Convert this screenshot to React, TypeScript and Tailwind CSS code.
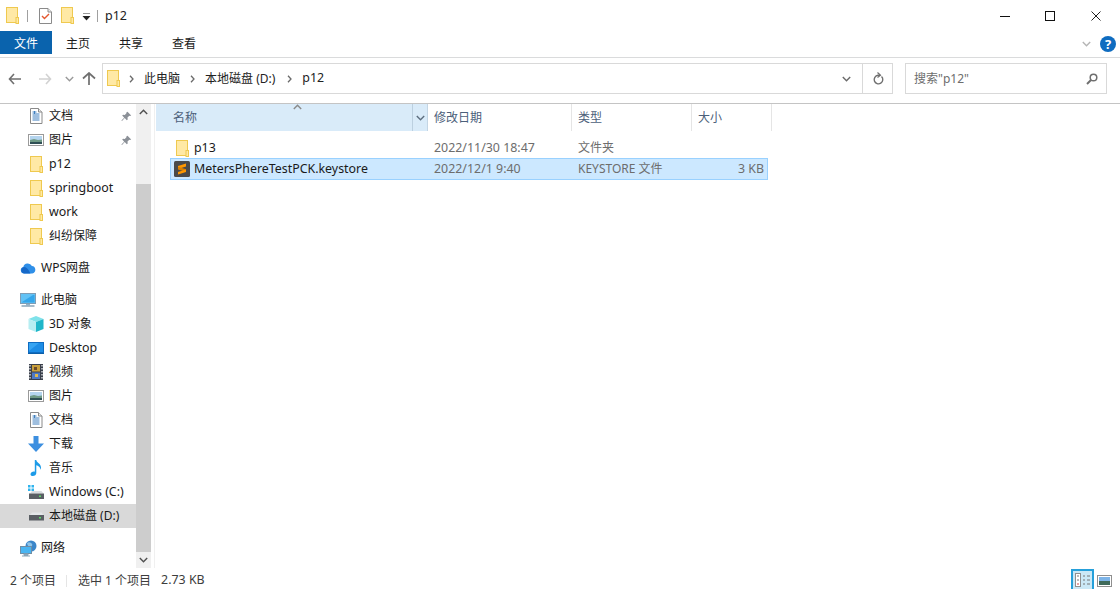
import React from "react";

const Folder = ({ className = "" }: { className?: string }) => (
  <svg width="13" height="17" viewBox="0 0 13 17" className={`shrink-0 ${className}`}>
    <rect x="0.5" y="0.5" width="11" height="15" fill="#ffe9a5" stroke="#efc94f" />
    <rect x="10" y="10.5" width="2.5" height="6" fill="#ffe9a5" stroke="#efc94f" />
  </svg>
);

const DocIcon = () => (
  <svg width="14" height="16" viewBox="0 0 14 16" className="shrink-0">
    <path d="M1.5.5h8l3.5 3.5v11.500h-11.500z" fill="#fff" stroke="#8a8a8a" />
    <path d="M9.500.5v3.500h3.500" fill="#e8e8e8" stroke="#8a8a8a" />
    <path d="M3.500 4h4M3.500 6h7M3.500 8h7M3.500 10h7M3.500 12h7" stroke="#3f7fbf" strokeWidth="1" />
    <path d="M5.500 3v3" stroke="#3f7fbf" />
  </svg>
);

const PicIcon = () => (
  <svg width="16" height="12" viewBox="0 0 16 12" className="shrink-0">
    <rect x="0.500" y="0.500" width="15" height="11" fill="#fff" stroke="#9a9a9a" />
    <rect x="2" y="2" width="12" height="4" fill="#b4d4ee" />
    <path d="M2 6l4-1 4 1 4-.5V10H2z" fill="#6f9a86" />
    <path d="M2 8h12v2H2z" fill="#2f4f55" />
  </svg>
);

const Pin = () => (
  <svg width="11" height="11" viewBox="0 0 11 11">
    <path d="M6.500.8l3.700 3.700-1.200.6-.7-.3-1.800 1.800.2 1.800-.9.800-2.100-2.100-2.700 2.900-.6-.5 2.800-2.800-2-2.100.8-.9 1.800.2 1.800-1.800-.2-.8z" fill="#8b9097" />
  </svg>
);

const Cloud = () => (
  <svg width="16" height="12" viewBox="0 0 16 12" className="shrink-0">
    <path d="M4 11.500a3.300 3.300 0 0 1-.7-6.500 4.600 4.600 0 0 1 8.600-1 3.800 3.800 0 0 1 .4 7.500z" fill="#2f8fe8" />
    <path d="M4 11.500a3.300 3.300 0 0 1 0-6.500c2 0 3.500 1.500 4.500 3l2 3.500z" fill="#1668c8" />
  </svg>
);

const PC = () => (
  <svg width="16" height="14" viewBox="0 0 16 14" className="shrink-0">
    <rect x="0.500" y="0.500" width="15" height="10" fill="#62c2f5" stroke="#7f9db5" />
    <path d="M2 9l11-7h1.500v7.500H2z" fill="#35a6ea" />
    <path d="M6 11h4v1.500H6z" fill="#8fb2c9" />
    <path d="M1.500 13h13" stroke="#8aa5b8" strokeWidth="1.500" />
  </svg>
);

const Cube = () => (
  <svg width="16" height="16" viewBox="0 0 16 16" className="shrink-0">
    <path d="M8 0l7.500 3-7.500 3L.5 3z" fill="#7fe2ea" />
    <path d="M.5 3L8 6v10L.5 13z" fill="#b6eef2" />
    <path d="M15.500 3L8 6v10l7.500-3z" fill="#1fb6c9" />
  </svg>
);

const Desk = () => (
  <svg width="16" height="12" viewBox="0 0 16 12" className="shrink-0">
    <rect x="0.500" y="0.500" width="15" height="10" fill="#36a4f2" stroke="#0f6cc2" />
    <path d="M1 9l10-8h4v9H1z" fill="#1d8de6" />
    <path d="M0 11h16v1H0z" fill="#0c5fa8" />
  </svg>
);

const Film = () => (
  <svg width="14" height="16" viewBox="0 0 14 16" className="shrink-0">
    <rect width="14" height="16" fill="#3a3f4a" />
    <path d="M1 1v14M13 1v14" stroke="#cfd3d8" strokeWidth="1.500" strokeDasharray="1.500 1.500" />
    <rect x="3" y="1" width="8" height="6.500" fill="#c9a03c" />
    <rect x="3" y="8.500" width="8" height="6.500" fill="#4d78c4" />
    <path d="M5 3h3v3H5z" fill="#6c4a2a" />
    <path d="M6 10h3v3H6z" fill="#e0b84a" />
  </svg>
);

const Down = () => (
  <svg width="16" height="16" viewBox="0 0 16 16" className="shrink-0">
    <path d="M5.500 0h5v7.500H16L8 16 0 7.500h5.500z" fill="#3c8fe0" />
  </svg>
);

const Music = () => (
  <svg width="12" height="16" viewBox="0 0 12 16" className="shrink-0">
    <path d="M4.800 0h1.500c.2 2.500 4.700 3.500 4.700 7.500 0 1-.3 1.700-.7 2.200.1-2.800-2-3.800-4-4.400V13c0 1.800-1.700 3-3.500 3C1.300 16 .5 15.200.5 14.200c0-1.500 1.800-2.700 3.300-2.700.4 0 .7 0 1 .2z" fill="#1c9be8" />
  </svg>
);

const WinDrive = () => (
  <svg width="16" height="15" viewBox="0 0 16 15" className="shrink-0">
    <path d="M0 0h2.500v2.500H0zM3.500 0H6v2.500H3.500zM0 3.500h2.500V6H0zM3.500 3.500H6V6H3.500z" fill="#2fb4ee" />
    <path d="M2 8.500 4 6h9.500l2 2.500z" fill="#d9dde0" />
    <rect x="1" y="8.500" width="15" height="5.500" fill="#5a5f64" />
    <rect x="11" y="10.500" width="2" height="1.500" fill="#5fdc6a" />
  </svg>
);

const Drive = () => (
  <svg width="16" height="9" viewBox="0 0 16 9" className="shrink-0">
    <path d="M2 3 4 .5h9.500l2 2.500z" fill="#e4e7e9" />
    <rect x="1" y="3" width="15" height="5.500" fill="#5a5f64" />
    <rect x="11" y="5" width="2" height="1.500" fill="#5fdc6a" />
  </svg>
);

const Net = () => (
  <svg width="17" height="17" viewBox="0 0 17 17" className="shrink-0">
    <circle cx="11" cy="6" r="5.500" fill="#3b86c9" />
    <path d="M7 3c2-1.500 4-.5 5 1s-1 3-2 3-3-2-3-4z" fill="#8fc4e8" />
    <rect x="0.500" y="6.500" width="11" height="7" fill="#49b5f2" stroke="#6f8ea5" />
    <path d="M4 14h4v1.500H4zM2 16h8" stroke="#8aa5b8" fill="#8aa5b8" />
  </svg>
);

const SublimeIcon = () => (
  <svg width="16" height="16" viewBox="0 0 16 16" className="shrink-0">
    <rect width="16" height="16" rx="1.500" fill="#4a4a4a" />
    <path d="M12 2.500 4 5v3l8-2.500z" fill="#ff9800" />
    <path d="M4 5.800 12 8.300V11L4 8.500z" fill="#d97f00" />
    <path d="M12 8.500 4 11v2.500L12 11z" fill="#ff9800" />
  </svg>
);

type Item = { icon?: React.ReactNode; label?: string; pin?: boolean; indent?: boolean; selected?: boolean; latin?: boolean };

const items: Item[] = [
  { icon: <DocIcon />, label: "文档", pin: true, indent: true },
  { icon: <PicIcon />, label: "图片", pin: true, indent: true },
  { icon: <Folder />, label: "p12", indent: true, latin: true },
  { icon: <Folder />, label: "springboot", indent: true, latin: true },
  { icon: <Folder />, label: "work", indent: true, latin: true },
  { icon: <Folder />, label: "纠纷保障", indent: true },
  {},
  { icon: <Cloud />, label: "WPS网盘" },
  {},
  { icon: <PC />, label: "此电脑" },
  { icon: <Cube />, label: "3D 对象", indent: true },
  { icon: <Desk />, label: "Desktop", indent: true, latin: true },
  { icon: <Film />, label: "视频", indent: true },
  { icon: <PicIcon />, label: "图片", indent: true },
  { icon: <DocIcon />, label: "文档", indent: true },
  { icon: <Down />, label: "下载", indent: true },
  { icon: <Music />, label: "音乐", indent: true },
  { icon: <WinDrive />, label: "Windows (C:)", indent: true, latin: true },
  { icon: <Drive />, label: "本地磁盘 (D:)", indent: true, selected: true },
  {},
  { icon: <Net />, label: "网络" },
];

const Crumb = () => (
  <svg width="5" height="8" viewBox="0 0 5 8" className="shrink-0">
    <path d="M1 .8 4 4 1 7.200" fill="none" stroke="#6a6a6a" strokeWidth="1.300" />
  </svg>
);

const SmallChevron = ({ up, color = "#6a6a6a" }: { up?: boolean; color?: string }) => (
  <svg width="9" height="6" viewBox="0 0 9 6">
    <path d={up ? "M.8 5 4.500 1.200 8.200 5" : "M.8 1 4.500 4.800 8.200 1"} fill="none" stroke={color} strokeWidth="1.400" />
  </svg>
);

export default function App() {
  return (
    <div
      className="w-[1120px] h-[589px] overflow-hidden bg-white flex flex-col text-[12px] leading-none text-[#1a1a1a]"
      style={{ fontFamily: '"Noto Sans", "Noto Sans CJK SC", sans-serif' }}
    >
      {/* Title bar */}
      <div className="h-[31px] shrink-0 flex items-center pl-[6px]">
        <Folder />
        <div className="w-px h-[12px] bg-[#a0a0a0] ml-[8px]" />
        <svg width="13" height="16" viewBox="0 0 13 16" className="ml-[11px]">
          <path d="M.5.5h8.500l3.500 3.500v11.500H.5z" fill="#fff" stroke="#8a8a8a" />
          <path d="M9 .5V4h3.500" fill="#ececec" stroke="#8a8a8a" />
          <path d="M3 8l2.500 2.500L10 6" fill="none" stroke="#e4572e" strokeWidth="1.400" />
        </svg>
        <Folder className="ml-[9px]" />
        <svg width="9" height="8" viewBox="0 0 9 8" className="ml-[8px] mt-[2px]">
          <path d="M1 0h7" stroke="#333" />
          <path d="M.5 3h8L4.500 7.500z" fill="#222" />
        </svg>
        <div className="w-px h-[12px] bg-[#a0a0a0] ml-[6px]" />
        <span className="ml-[7px] mt-[2px] text-[12.500px] text-[#222]">p12</span>
        <div className="flex-1" />
        <svg width="10" height="10" viewBox="0 0 10 10">
          <path d="M0 5.500h10" stroke="#111" />
        </svg>
        <svg width="10" height="10" viewBox="0 0 10 10" className="ml-[35px]">
          <rect x=".5" y=".5" width="9" height="9" fill="none" stroke="#111" />
        </svg>
        <svg width="10" height="10" viewBox="0 0 10 10" className="ml-[36px] mr-[19px]">
          <path d="M.5.5l9 9M9.500.5l-9 9" stroke="#222" />
        </svg>
      </div>

      {/* Ribbon tabs */}
      <div className="h-[27px] shrink-0 flex border-b border-[#dadbdc]">
        <div className="w-[52px] h-[23px] bg-[#0a63ad] text-white flex items-center justify-center pt-[2px]">文件</div>
        <div className="ml-[14px] h-[23px] flex items-center pt-[2px]">主页</div>
        <div className="ml-[29px] h-[23px] flex items-center pt-[2px]">共享</div>
        <div className="ml-[29px] h-[23px] flex items-center pt-[2px]">查看</div>
        <div className="flex-1" />
        <div className="h-[25px] flex items-center">
          <SmallChevron color="#b5b5b5" />
        </div>
        <div className="ml-[9px] mr-[4px] mt-[5px] w-[16px] h-[16px] rounded-full bg-[#0f6cc0] text-white font-bold text-[13px] flex items-center justify-center">?</div>
      </div>

      {/* Navigation */}
      <div className="h-[46px] shrink-0 flex items-center border-b border-[#c4c4c4] pb-[4px]">
        <svg width="14" height="12" viewBox="0 0 14 12" className="ml-[8px]">
          <path d="M6 1 1.500 6 6 11M1.500 6H13" fill="none" stroke="#6f6f6f" strokeWidth="1.600" />
        </svg>
        <svg width="14" height="12" viewBox="0 0 14 12" className="ml-[16px]">
          <path d="M8 1l4.500 5L8 11M12.500 6H1" fill="none" stroke="#d2d2d2" strokeWidth="1.600" />
        </svg>
        <div className="ml-[13px]">
          <SmallChevron color="#9a9a9a" />
        </div>
        <svg width="14" height="13" viewBox="0 0 14 13" className="ml-[8px]">
          <path d="M1 6.500 7 1l6 5.500M7 1v12" fill="none" stroke="#6f6f6f" strokeWidth="1.700" />
        </svg>
        <div className="ml-[6px] w-[791px] h-[31px] border border-[#d9d9d9] flex items-center">
          <Folder className="ml-[4px]" />
          <div className="ml-[9px]"><Crumb /></div>
          <span className="ml-[10px] text-[#222]">此电脑</span>
          <div className="ml-[10px]"><Crumb /></div>
          <span className="ml-[10px] text-[#222]">本地磁盘 (D:)</span>
          <div className="ml-[12px]"><Crumb /></div>
          <span className="ml-[10px] text-[#222] text-[12.400px]">p12</span>
          <div className="flex-1" />
          <SmallChevron color="#6a6a6a" />
          <div className="ml-[11px] w-px h-full bg-[#d9d9d9]" />
          <div className="w-[29px] flex justify-center">
            <svg width="12" height="14" viewBox="0 0 12 14">
              <path d="M9.500 4.500A4.300 4.300 0 1 1 6 3.300H8" fill="none" stroke="#6f6f6f" strokeWidth="1.400" />
              <path d="M5.500.5 8.500 3.300 5.500 5.500" fill="none" stroke="#6f6f6f" strokeWidth="1.200" />
            </svg>
          </div>
        </div>
        <div className="ml-[12px] w-[202px] h-[31px] border border-[#d9d9d9] flex items-center pl-[8px] pr-[8px] text-[#6d6d6d]">
          <span>搜索"p12"</span>
          <div className="flex-1" />
          <svg width="12" height="12" viewBox="0 0 12 12">
            <circle cx="7.500" cy="4.500" r="3.300" fill="none" stroke="#6f6f6f" strokeWidth="1.500" />
            <path d="M5 7 1 11" stroke="#6f6f6f" strokeWidth="2" />
          </svg>
        </div>
      </div>

      {/* Body */}
      <div className="flex-1 min-h-0 flex">
        {/* Nav pane */}
        <div className="w-[136px] shrink-0 flex flex-col">
          {items.map((it, i) => (
            <div
              key={i}
              className={`shrink-0 flex items-center ${it.icon ? "h-6" : "h-2"} ${it.selected ? "bg-[#d9d9d9]" : ""}`}
            >
              {it.icon && (
                <>
                  <div className={`flex justify-center shrink-0 w-[18px] ${it.indent ? "ml-[27px]" : "ml-[19px]"}`}>{it.icon}</div>
                  <span className={`ml-[4px] whitespace-nowrap ${it.latin ? "text-[12.400px]" : ""}`}>{it.label}</span>
                  {it.pin && (
                    <div className="ml-auto mr-[4px]">
                      <Pin />
                    </div>
                  )}
                </>
              )}
            </div>
          ))}
        </div>
        {/* Scrollbar */}
        <div className="w-[15px] shrink-0 bg-[#f0f0f0] flex flex-col">
          <div className="h-[16px] flex items-center justify-center">
            <SmallChevron up color="#505050" />
          </div>
          <div className="h-[64px]" />
          <div className="flex-1 bg-[#cdcdcd]" />
          <div className="h-[16px] flex items-center justify-center">
            <SmallChevron color="#505050" />
          </div>
        </div>
        <div className="w-[3px] shrink-0" />
        <div className="w-px shrink-0 bg-[#f0f0f0]" />
        <div className="w-px shrink-0" />
        {/* File list */}
        <div className="flex-1 min-w-0 flex flex-col">
          <div className="h-[27px] shrink-0 flex text-[#4c607a]">
            <div className="w-[272px] bg-[#d9ebf9] flex items-center relative border-r border-[#c3d5e4]">
              <span className="ml-[17px]">名称</span>
              <div className="absolute left-[137px] top-0">
                <SmallChevron up color="#8a8a8a" />
              </div>
              <div className="ml-auto w-[15px] h-full border-l border-[#bcd0e0] flex items-center justify-center">
                <SmallChevron color="#5e6f80" />
              </div>
            </div>
            <div className="w-[144px] flex items-center pl-[6px] border-r border-[#e5e5e5]">修改日期</div>
            <div className="w-[120px] flex items-center pl-[6px] border-r border-[#e5e5e5]">类型</div>
            <div className="w-[80px] flex items-center pl-[6px] border-r border-[#e5e5e5]">大小</div>
          </div>
          <div className="h-[7px] shrink-0" />
          <div className="ml-[14px] w-[598px] h-[20px] shrink-0 flex items-center px-[5px] text-[#6d6d6d]">
            <div className="w-[14px] flex justify-center shrink-0"><Folder /></div>
            <span className="ml-[5px] w-[240px] text-[#1a1a1a] text-[12.400px]">p13</span>
            <span className="w-[144px] text-[12.400px]">2022/11/30 18:47</span>
            <span>文件夹</span>
          </div>
          <div className="ml-[14px] w-[598px] h-[22px] shrink-0 flex items-center pl-[3px] pr-[3px] bg-[#cce8ff] border border-[#99d1ff] text-[#6d6d6d]">
            <SublimeIcon />
            <span className="ml-[4px] w-[240px] text-[#1a1a1a] whitespace-nowrap text-[12.400px]">MetersPhereTestPCK.keystore</span>
            <span className="w-[144px] text-[12.400px]">2022/12/1 9:40</span>
            <span className="whitespace-nowrap">KEYSTORE 文件</span>
            <span className="ml-auto text-[12.400px]">3 KB</span>
          </div>
        </div>
      </div>

      {/* Status bar */}
      <div className="h-[21px] shrink-0 flex items-center text-[#3d3d3d] pt-[4px]">
        <span className="ml-[10px]">2 个项目</span>
        <div className="ml-[10px] w-px h-[12px] bg-[#e5e5e5]" />
        <span className="ml-[11px]">选中 1 个项目</span>
        <span className="ml-[10px] text-[12.400px]">2.73 KB</span>
        <div className="flex-1" />
        <div className="w-[23px] h-[20px] border-2 border-b-0 border-[#26a0da] bg-[#cbe8f6] flex items-center justify-center self-end">
          <svg width="16" height="14" viewBox="0 0 16 14">
            <rect x=".5" y=".5" width="5" height="13" fill="#fff" stroke="#8f8f8f" />
            <path d="M2 3h2M2 7h2" stroke="#777" />
            <path d="M2 11h2" stroke="#c44" />
            <path d="M8 3h2M12 3h3M8 7h2M12 7h3M8 11h2M12 11h3" stroke="#777" />
          </svg>
        </div>
        <svg width="15" height="12" viewBox="0 0 15 12" className="ml-[3px] mr-[8px]">
          <rect x=".5" y=".5" width="14" height="11" fill="#fff" stroke="#8f8f8f" />
          <rect x="2" y="2" width="11" height="4" fill="#7db4e8" />
          <path d="M2 6h11v4H2z" fill="#3f6a5a" />
        </svg>
      </div>
    </div>
  );
}
